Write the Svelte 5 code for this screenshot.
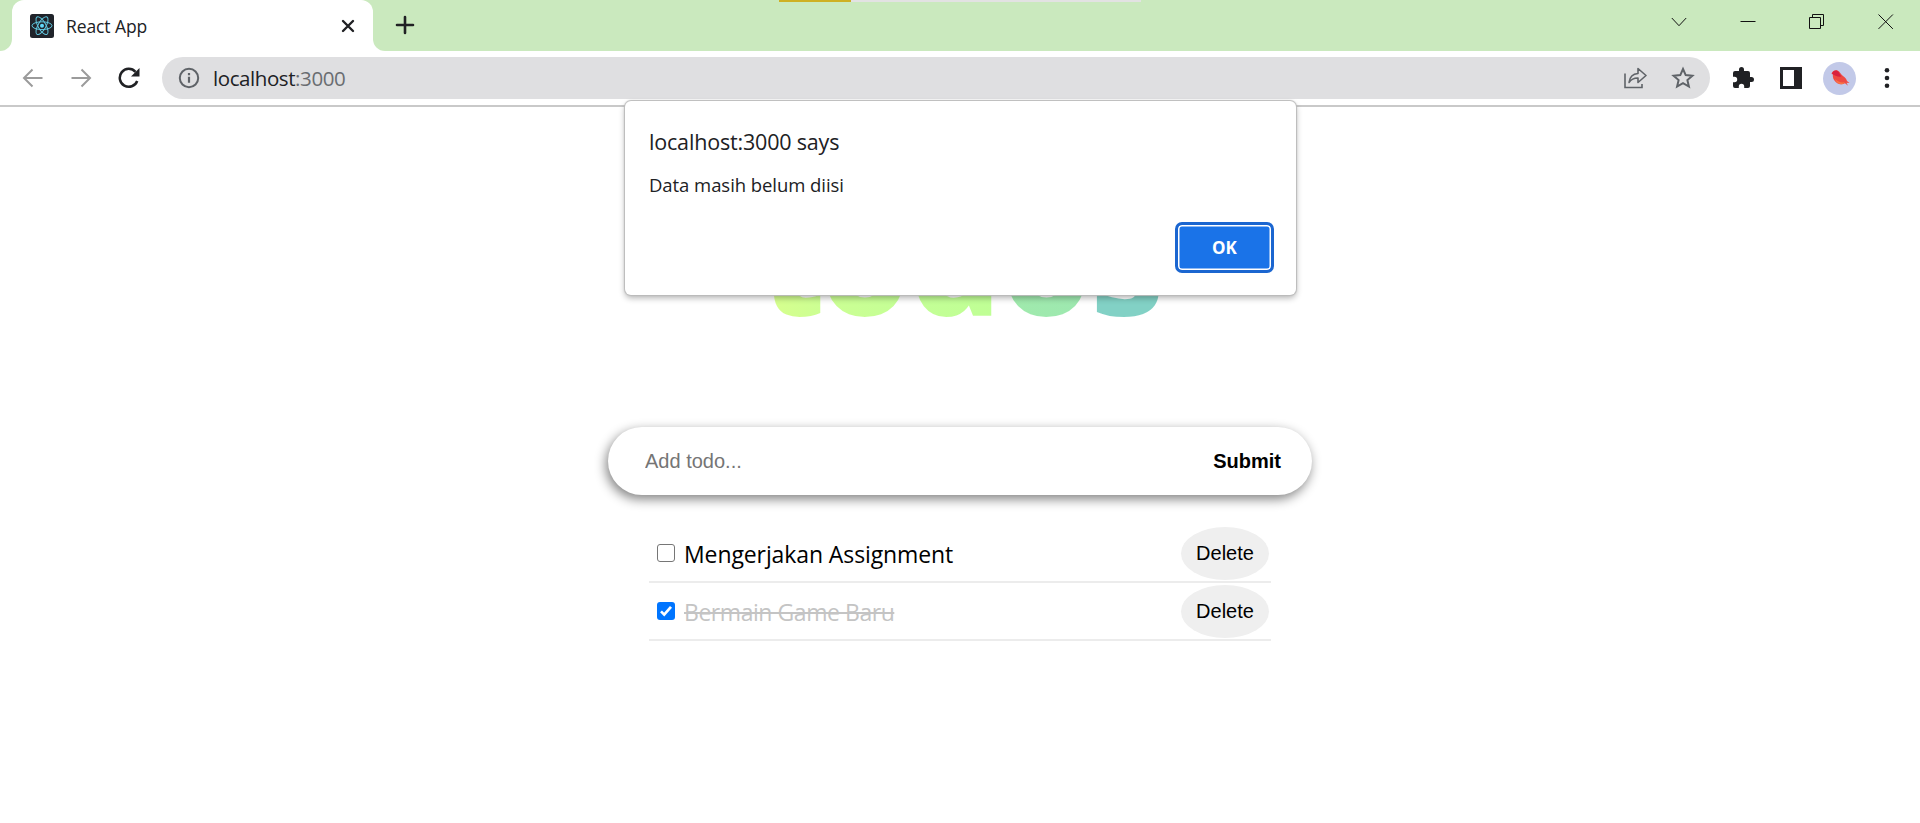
<script>
  const todos = $state([
    { title: 'Mengerjakan Assignment', done: false },
    { title: 'Bermain Game Baru', done: true },
  ]);
</script>

<div class="window">
  <header class="tabstrip">
    <div class="corner left"></div>
    <div class="tab">
      <svg class="favicon" width="24" height="24" viewBox="0 0 24 24">
        <rect width="24" height="24" rx="2.5" fill="#20232a" />
        <g fill="none" stroke="#61c8e0" stroke-width="1">
          <ellipse cx="12" cy="11.7" rx="10" ry="3.9" />
          <ellipse cx="12" cy="11.7" rx="10" ry="3.9" transform="rotate(60 12 11.7)" />
          <ellipse cx="12" cy="11.7" rx="10" ry="3.9" transform="rotate(120 12 11.7)" />
        </g>
        <circle cx="12" cy="11.7" r="2" fill="#61dafb" />
      </svg>
      <span class="tab-title">React App</span>
      <svg class="tab-close" width="14" height="14" viewBox="0 0 14 14"><path d="M2 2l10 10M12 2L2 12" stroke="#202124" stroke-width="2.4" stroke-linecap="round" /></svg>
    </div>
    <div class="corner right"></div>
    <svg class="plus" width="20" height="20" viewBox="0 0 20 20"><path d="M10 2v16M2 10h16" stroke="#202124" stroke-width="2.6" stroke-linecap="round" /></svg>
    <div class="loader"><i></i></div>
    <div class="controls">
      <svg width="16" height="16" viewBox="0 0 16 16"><path d="M.8 4l7.2 7.7L15.200 4" /></svg>
      <svg width="16" height="16" viewBox="0 0 16 16"><path d="M.5 7.500h15" /></svg>
      <svg width="16" height="16" viewBox="0 0 16 16"><path d="M.5 3.500h11v11H.5zM3.500 3.500V.5h11v11h-3" /></svg>
      <svg width="16" height="16" viewBox="0 0 16 16"><path d="M.5.5l14.400 14.400M14.900.5L.5 14.900" /></svg>
    </div>
  </header>

  <nav class="toolbar">
    <svg class="nav" width="22" height="22" viewBox="0 0 22 22"><path d="M20.500 11H2.500M10.500 2.500L2 11l8.500 8.500" fill="none" stroke="#9b9b9b" stroke-width="2" /></svg>
    <svg class="nav" width="22" height="22" viewBox="0 0 22 22"><path d="M1.500 11h18M11.500 2.500L20 11l-8.500 8.500" fill="none" stroke="#9b9b9b" stroke-width="2" /></svg>
    <svg class="nav reload" width="22" height="22" viewBox="0 0 22 22"><path d="M19.200 14A9 9 0 1 1 17.500 4.800" fill="none" stroke="#202124" stroke-width="2.500" /><path d="M21.500 1v8.500H13z" fill="#202124" /></svg>
    <div class="address">
      <svg width="22" height="22" viewBox="0 0 22 22"><circle cx="11" cy="11" r="9.200" fill="none" stroke="#5f6368" stroke-width="2" /><path d="M11 9.800v6M11 6v2.200" stroke="#5f6368" stroke-width="2.200" /></svg>
      <span class="url">localhost<em>:3000</em></span>
      <svg class="share" width="24" height="24" viewBox="0 0 24 24"><path d="M2 7.500V21.500h17V18" fill="none" stroke="#5f6368" stroke-width="1.600" /><path d="M6 16.500c.7-5.500 3.900-8.700 9-9V2.500L23 9.500l-8 7V12c-4-.1-6.800 1.300-9 4.500z" fill="none" stroke="#5f6368" stroke-width="1.600" stroke-linejoin="round" /></svg>
      <svg class="star" width="24" height="24" viewBox="0 0 24 24"><path d="M12 3l2.700 6.100 6.700.6-5 4.400 1.500 6.500-5.900-3.400-5.900 3.400 1.500-6.500-5-4.400 6.700-.6z" fill="none" stroke="#5f6368" stroke-width="2" /></svg>
    </div>
    <svg class="puzzle" width="24" height="24" viewBox="0 0 24 24"><path d="M20.500 11H19V7a2 2 0 0 0-2-2h-4V3.500a2.500 2.500 0 0 0-5 0V5H4a2 2 0 0 0-2 2v3.800h1.500a2.700 2.700 0 0 1 0 5.400H2V20a2 2 0 0 0 2 2h3.800v-1.500a2.700 2.700 0 0 1 5.400 0V22H17a2 2 0 0 0 2-2v-4h1.500a2.500 2.500 0 0 0 0-5z" fill="#202124" /></svg>
    <svg class="panel" width="22" height="22" viewBox="0 0 22 22"><path fill-rule="evenodd" d="M0 0h22v22H0zM3 3v16h11V3z" fill="#202124" /></svg>
    <svg class="avatar" width="33" height="33" viewBox="0 0 33 33">
      <circle cx="16.500" cy="16.500" r="16.500" fill="#c2c9e8" />
      <path d="M8.500 12C9 9 12 7.500 14.500 8.500c2.500 1 3 3.500 5.500 5.500 2.500 2 3.500 3 4 5l2.500 2-3-.3 1.500 3-3-2.500c-2.500 1.500-6 1.500-9-1-3-2.500-3.200-5-3.200-8z" fill="#ee4a42" />
      <path d="M9 11.500c1-2.500 3.500-3.500 5.500-2.500 2 1 2 3.500 4 5.500-3 .5-7.500-.5-9.500-3z" fill="#d9213f" />
      <path d="M12 17c3 3 7 4 10 3l-2 2c-4 1-7-1.500-8-5z" fill="#fa7445" />
    </svg>
    <svg class="dots" width="6" height="22" viewBox="0 0 6 22"><g fill="#202124"><circle cx="3" cy="3.200" r="2.300" /><circle cx="3" cy="11" r="2.300" /><circle cx="3" cy="18.800" r="2.300" /></g></svg>
  </nav>

  <main>
    <h1><span>t</span>odos</h1>
    <form onsubmit={(e) => e.preventDefault()}>
      <input class="entry" placeholder="Add todo..." />
      <button class="submit">Submit</button>
    </form>
    <ul>
      {#each todos as todo}
        <li>
          <button class="check" class:on={todo.done} aria-label={todo.title} onclick={() => (todo.done = !todo.done)}>
            {#if todo.done}
              <svg width="18" height="18" viewBox="0 0 18 18"><path d="M4 9.400l3.200 3.200L14 4.800" fill="none" stroke="#fff" stroke-width="2.700" /></svg>
            {/if}
          </button>
          <span class="name" class:done={todo.done}>{todo.title}</span>
          <button class="delete">Delete</button>
        </li>
      {/each}
    </ul>
  </main>

  <div class="dialog" role="alertdialog">
    <h2>localhost:3000 says</h2>
    <p>Data masih belum diisi</p>
    <button class="ok">OK</button>
  </div>
</div>

<style>
  :global(body) { margin: 0; background: #fff; }
  * { box-sizing: border-box; }
  svg { display: block; flex: none; }
  button, input { border: 0; margin: 0; padding: 0; outline: 0; background: none; }
  .window { position: relative; height: 823px; overflow: hidden; background: #fff; font-family: 'Open Sans', sans-serif; color: #202124; }
  .tabstrip { position: relative; height: 51px; background: #cae9be; display: flex; }
  .tab { width: 361px; background: #fff; border-radius: 12px 12px 0 0; display: flex; align-items: center; padding: 0 18px; }
  .tab-title { margin-left: 12px; font-size: 17.500px; letter-spacing: -.1px; flex: 1; }
  .corner { width: 12px; background: #fff; position: relative; overflow: hidden; }
  .corner::before { content: ''; display: block; height: 51px; background: #cae9be; }
  .corner.left::before { border-bottom-right-radius: 12px; }
  .corner.right::before { border-bottom-left-radius: 12px; }
  .plus { margin: 15px 0 0 10px; }
  .loader { position: absolute; left: 779px; top: 0; width: 362px; height: 2px; background: #e2e2e2; }
  .loader i { display: block; width: 72px; height: 2px; background: #ceb023; }
  .controls { margin: 14px 26px 0 auto; display: flex; gap: 53px; }
  .controls path { fill: none; stroke: #111; stroke-width: 1; }
  .toolbar { height: 56px; display: flex; align-items: center; padding: 0 30px 0 22px; border-bottom: 2px solid #c9c9c9; }
  .nav { margin-right: 26px; }
  .nav.reload { margin-right: 22px; }
  .address { width: 1548px; height: 42px; border-radius: 21px; background: #dfdfe1; display: flex; align-items: center; padding: 0 15px 0 16px; }
  .url { margin-left: 13px; font-size: 20.500px; letter-spacing: -.42px; flex: 1; }
  .url em { font-style: normal; color: #6a6d71; }
  .star { margin-left: 24px; }
  .puzzle { margin-left: 21px; }
  .panel { margin-left: 25px; }
  .avatar { margin-left: 21px; }
  .dots { margin-left: auto; }
  main { width: 704px; margin: 0 auto; }
  h1 { margin: 52px 0 0; width: 704px; height: 268px; padding-left: 153px; font: 700 145px/200px 'Open Sans', sans-serif; -webkit-text-stroke: 2px transparent; background: linear-gradient(90deg, #d6ff8e 165px, #ccff93 215px, #c4ff96 300px, #bfff95 390px, #a0eaac 396px, #9de8b0 482px, #82d1c5 486px); background-clip: text; color: transparent; }
  h1 span { letter-spacing: -4px; }
  form { height: 68px; border-radius: 34px; background: #fff; box-shadow: -2px 4px 12px #808080; display: flex; align-items: center; padding: 0 31px 0 37px; }
  .entry { flex: 1; font: 20px 'Liberation Sans', Arial, sans-serif; }
  .entry::placeholder { color: #757575; }
  .submit { font: bold 20px 'Liberation Sans', Arial, sans-serif; color: #000; }
  ul { list-style: none; margin: 30px 41px 0; padding: 0; }
  li { height: 58px; border-bottom: 2px solid #ececec; display: flex; align-items: center; padding: 0 2px 0 8px; }
  .check { width: 18px; height: 18px; border: 1.500px solid #767676; border-radius: 3px; margin-bottom: 1px; }
  .check.on { border: 0; background: #0075ff; }
  .name { margin: 2px 0 0 9px; font-size: 23px; letter-spacing: -.1px; color: #000; flex: 1; }
  .name.done { color: #c4c4c4; letter-spacing: -.45px; text-decoration: line-through 2px; }
  .delete { width: 88px; height: 53px; border-radius: 50%; background: #efefef; color: #000; font: 20px 'Liberation Sans', Arial, sans-serif; }
  .dialog { position: absolute; left: 625px; top: 101px; width: 671px; height: 194px; background: #fff; border-radius: 6px; box-shadow: 0 0 1px 1px #bbb, 0 3px 6px rgba(0, 0, 0, .3); padding: 24px 22px 22px 24px; display: flex; flex-direction: column; }
  h2 { margin: 0; font-weight: 400; font-size: 21.500px; letter-spacing: -.18px; line-height: 34px; }
  p { margin: 11px 0 0; font-size: 18.500px; letter-spacing: -.06px; line-height: 30px; }
  .ok { align-self: flex-end; margin-top: auto; width: 99px; height: 51px; border: 3px solid #1b66d0; border-radius: 7px; background: #1a73e8; box-shadow: inset 0 0 0 1.500px #fff; color: #fff; font: 700 17px 'Open Sans', sans-serif; }
</style>
